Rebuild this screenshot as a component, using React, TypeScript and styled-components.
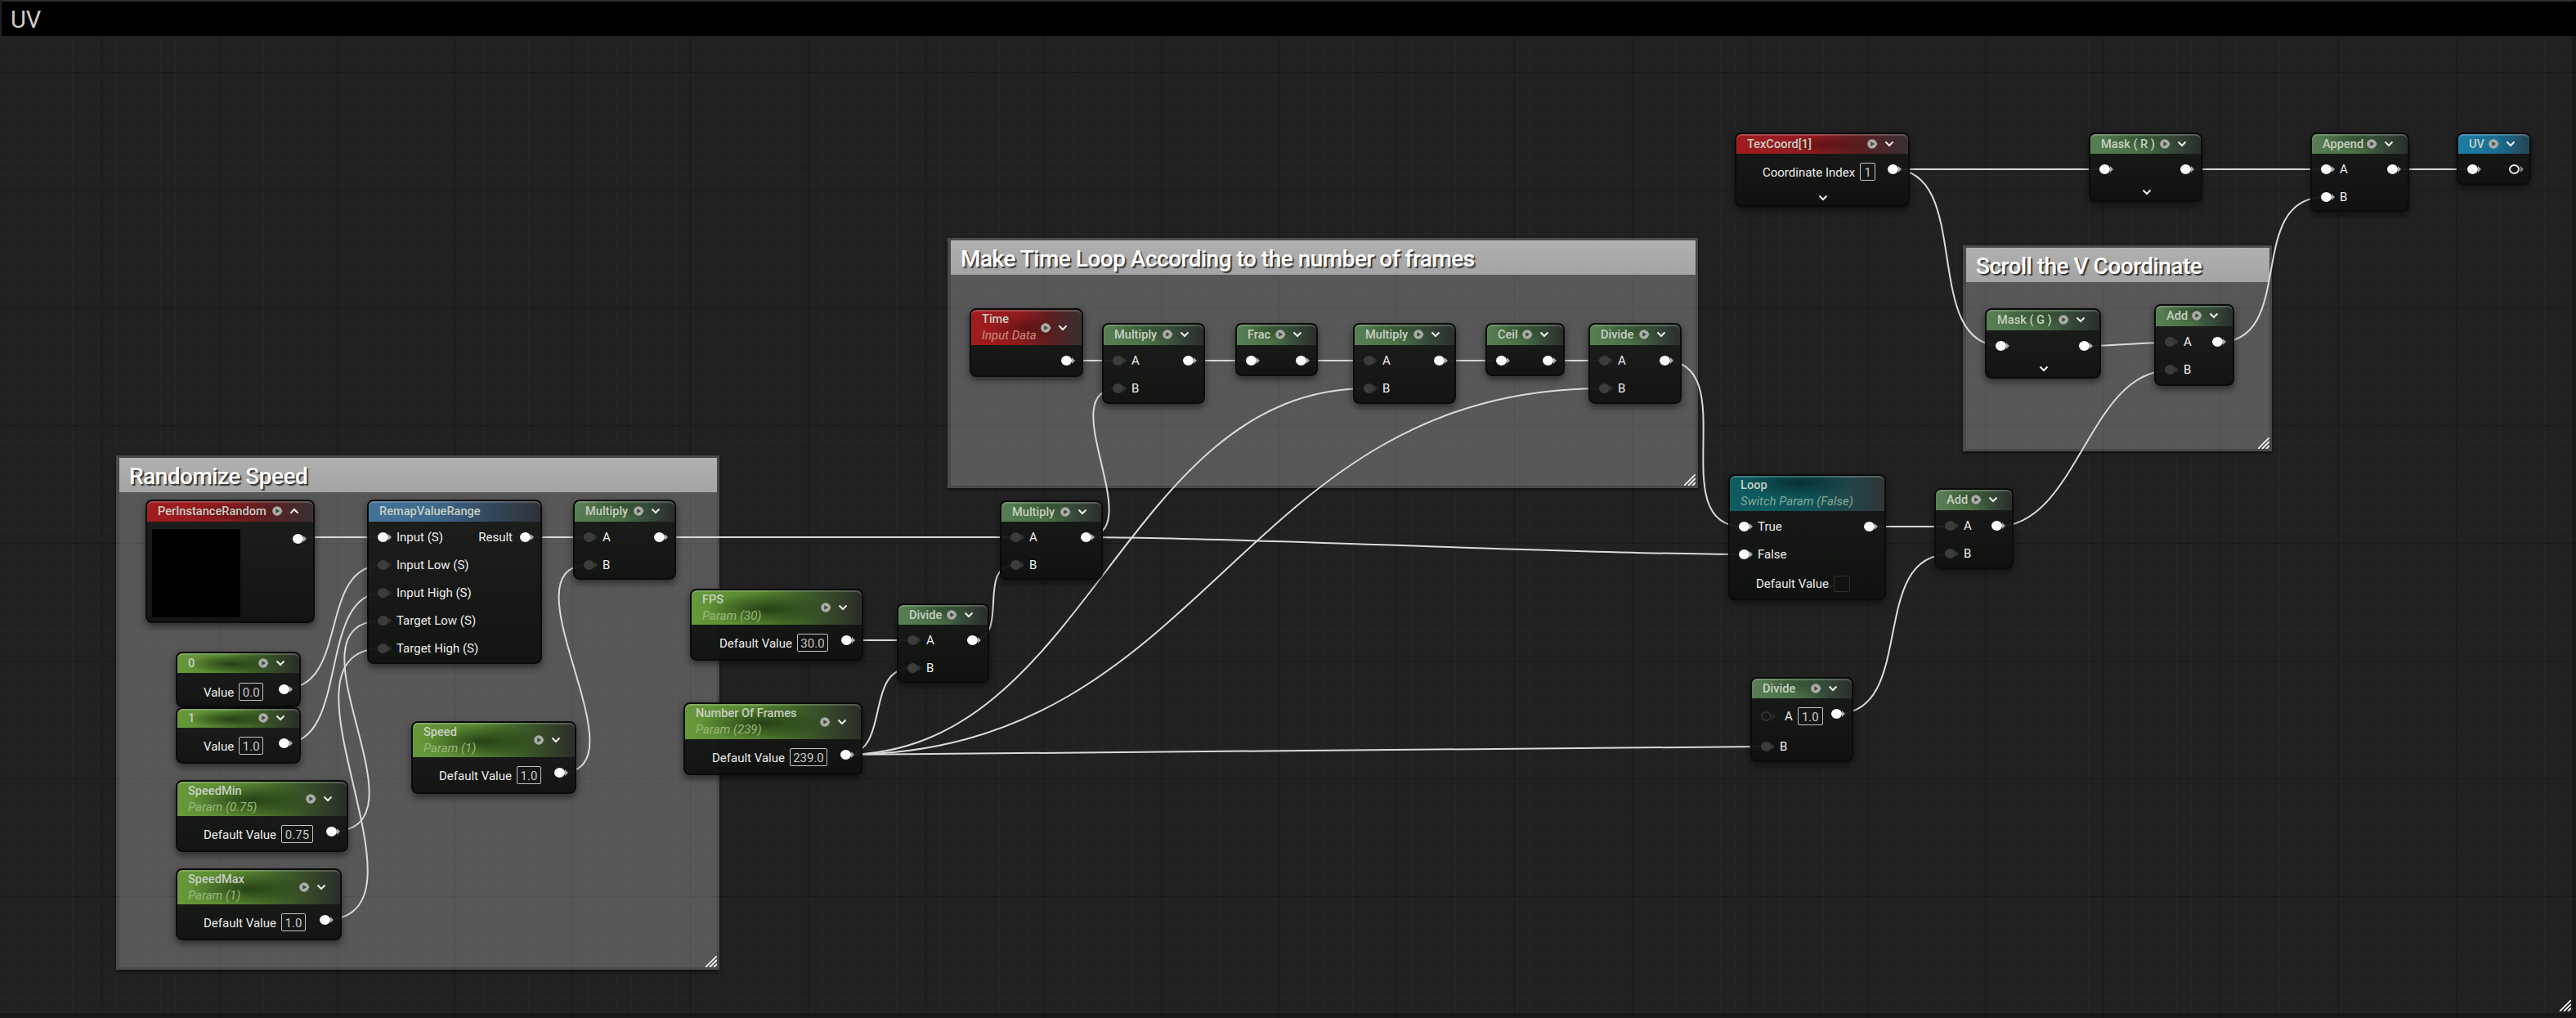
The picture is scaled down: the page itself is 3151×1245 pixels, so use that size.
import React from "react";
import styled, { createGlobalStyle, css } from "styled-components";

const Global = createGlobalStyle`
  html, body { margin: 0; padding: 0; background: #1c1c1c; }
  #root { width: 3151px; height: 1245px; overflow: hidden; }
`;

const Page = styled.div`
  position: relative;
  width: 3151px;
  height: 1245px;
  overflow: hidden;
  font-family: Roboto, "Liberation Sans", sans-serif;
  background-color: #212121;
  background-image:
    linear-gradient(to right, #1a1a1a 1px, transparent 1px),
    linear-gradient(to bottom, #1a1a1a 1px, transparent 1px),
    linear-gradient(to right, #252525 1px, transparent 1px),
    linear-gradient(to bottom, #252525 1px, transparent 1px);
  background-size: 144px 144px, 144px 144px, 18px 18px, 18px 18px;
  background-position: 124px 0, 0 88px, 16px 0, 0 16px;
  &::after {
    content: "";
    position: absolute;
    inset: 0;
    border-right: 5px solid rgba(0, 0, 0, 0.22);
    border-bottom: 6px solid rgba(0, 0, 0, 0.22);
    box-sizing: border-box;
    pointer-events: none;
  }
`;

const TitleBar = styled.header`
  height: 42px;
  box-sizing: border-box;
  margin: 2px 0 0 2px;
  padding: 1px 0 0 11px;
  display: flex;
  align-items: center;
  background: #000;
  color: #cdcdcd;
  font-size: 29px;
  box-shadow: 0 -2px 0 #2b2b2b;
`;

const CommentBox = styled.section<{ $x: number; $y: number; $r: number; $b: number }>`
  position: absolute;
  left: ${(p) => p.$x}px;
  top: ${(p) => p.$y}px;
  width: ${(p) => p.$r - p.$x}px;
  height: ${(p) => p.$b - p.$y}px;
  box-sizing: border-box;
  border: solid rgba(255, 255, 255, 0.18);
  border-width: 3px 3px 3px 4px;
  background: rgba(255, 255, 255, 0.245);
  background-clip: padding-box;
  box-shadow: 0 2px 4px rgba(0, 0, 0, 0.6);
`;

const CommentHeader = styled.h2`
  margin: 0;
  height: 42px;
  box-sizing: border-box;
  padding: 2px 0 0 12px;
  display: flex;
  align-items: center;
  background: linear-gradient(to bottom, #b0b0b0, #a4a4a4);
  color: #fff;
  font-size: 28px;
  font-weight: 500;
  letter-spacing: -0.5px;
  text-shadow: 2px 2px 1px #363636;
`;

const Handle = styled.svg`
  position: absolute;
  right: 0;
  bottom: 0;
  width: 14px;
  height: 14px;
`;

const PageHandle = styled(Handle)`
  right: 6px;
  bottom: 8px;
`;

const WireLayer = styled.svg`
  position: absolute;
  left: 0;
  top: 0;
  width: 3151px;
  height: 1245px;
  pointer-events: none;
`;

const Wire = styled.path`
  fill: none;
  stroke: #dadada;
  stroke-width: 2;
`;

type Hue = "math" | "param" | "red" | "blue" | "sky" | "teal";

const hues: Record<Hue, ReturnType<typeof css>> = {
  math: css`
    background: radial-gradient(ellipse 40% 60% at 48% 25%, rgba(40, 62, 38, 0.6), transparent),
      linear-gradient(to right, #587f53 0%, #4a7046 45%, #36493a 75%, #2a2e2a 100%);
  `,
  param: css`
    background: radial-gradient(ellipse 36% 48% at 44% 55%, rgba(32, 56, 18, 0.88), transparent),
      linear-gradient(to right, #67993a 0%, #56862f 40%, #3d5e28 66%, #2a2d28 100%);
  `,
  red: css`
    background: radial-gradient(ellipse 30% 40% at 50% 55%, rgba(60, 10, 10, 0.5), transparent),
      linear-gradient(to right, #a21c1f 0%, #8e1b1d 45%, #5a2022 72%, #383031 100%);
  `,
  blue: css`
    background: linear-gradient(to right, #447398 0%, #3d668a 40%, #33465a 72%, #2e3236 100%);
  `,
  sky: css`
    background: linear-gradient(to right, #1c7da6 0%, #1a6e92 55%, #274553 100%);
  `,
  teal: css`
    background: radial-gradient(ellipse 35% 45% at 45% 20%, rgba(5, 40, 44, 0.8), transparent),
      linear-gradient(to right, #0f5c60 0%, #0e5458 50%, #21464a 75%, #303636 100%);
  `,
};

const subColors: Record<Hue, string> = {
  math: "#9cb098",
  param: "#98b67c",
  red: "#c98e80",
  blue: "#a0b0c0",
  sky: "#a0c0d0",
  teal: "#83a896",
};

const NodeBox = styled.article<{ $x: number; $y: number; $r: number; $b: number }>`
  position: absolute;
  left: ${(p) => p.$x}px;
  top: ${(p) => p.$y}px;
  width: ${(p) => p.$r - p.$x}px;
  height: ${(p) => p.$b - p.$y}px;
  box-sizing: border-box;
  border: 2px solid #0a0b0a;
  border-radius: 8px;
  background: linear-gradient(to bottom, rgba(25, 27, 25, 0.94), rgba(15, 17, 15, 0.95));
  box-shadow: 0 4px 9px rgba(0, 0, 0, 0.5);
`;

const NodeHeader = styled.header<{ $hue: Hue; $h: number; $two: boolean }>`
  position: relative;
  height: ${(p) => p.$h}px;
  box-sizing: border-box;
  display: flex;
  align-items: center;
  padding: 0 17px ${(p) => (p.$two ? 0 : 1)}px 13px;
  border-radius: 6px 6px 0 0;
  ${(p) => hues[p.$hue]}
  box-shadow: inset 0 2px 1px rgba(255, 255, 255, 0.2);
`;

const Titles = styled.div`
  display: flex;
  flex-direction: column;
  white-space: nowrap;
`;

const NodeTitle = styled.div`
  font-size: 14.6px;
  line-height: 20px;
  font-weight: 500;
  color: #c6cec2;
`;

const NodeSub = styled.div<{ $hue: Hue }>`
  font-size: 15px;
  line-height: 21px;
  font-style: italic;
  color: ${(p) => subColors[p.$hue]};
`;

const Tools = styled.div`
  margin-left: auto;
  display: flex;
  align-items: center;
  gap: 8px;
  flex: none;
`;

const IconSvg = styled.svg`
  display: block;
  flex: none;
`;

const ChevronIcon = ({ up }: { up?: boolean }) => (
  <IconSvg width="12" height="8" viewBox="0 0 12 8">
    <path d={up ? "M1.5 6.5 L6 2 L10.5 6.5" : "M1.5 1.5 L6 6 L10.5 1.5"} fill="none" stroke="#e8e8e8" strokeWidth="2.1" />
  </IconSvg>
);

const PreviewIcon = () => (
  <IconSvg width="13" height="12" viewBox="0 0 13 12">
    <circle cx="6" cy="6" r="5.8" fill="#a9ada5" />
    <path d="M4.4 3.2 L9 6 L4.4 8.8 Z" fill="#3a403a" />
    <path d="M10.6 4.4 L13 6 L10.6 7.6 Z" fill="#a9ada5" />
  </IconSvg>
);

const Body = styled.div<{ $top?: number }>`
  padding-top: ${(p) => p.$top ?? 2}px;
  display: flex;
  flex-direction: column;
`;

const PinRow = styled.div<{ $mt?: number }>`
  height: 34px;
  margin-top: ${(p) => p.$mt ?? 0}px;
  padding: 0 12px 0 11px;
  display: flex;
  align-items: center;
`;

const ValueRow = styled.div<{ $inset: number; $mt?: number }>`
  height: 22px;
  margin-top: ${(p) => p.$mt ?? 0}px;
  padding: 0 12px 0 ${(p) => p.$inset}px;
  display: flex;
  align-items: center;
  gap: 6px;
`;

const ExpandRow = styled.div<{ $mt: number }>`
  margin-top: ${(p) => p.$mt}px;
  display: flex;
  justify-content: center;
  padding-left: 2px;
`;

const Label = styled.span<{ $left?: boolean; $low?: boolean }>`
  font-size: 15px;
  line-height: 20px;
  color: #ececec;
  white-space: nowrap;
  margin-left: ${(p) => (p.$left ? 10 : 0)}px;
  padding-top: ${(p) => (p.$low ? 2 : 0)}px;
`;

const RightLabel = styled(Label)`
  margin-left: auto;
  margin-right: 9px;
`;

const ValueBox = styled.span<{ $w: number; $h?: number; $dim?: boolean }>`
  width: ${(p) => p.$w}px;
  height: ${(p) => p.$h ?? 22}px;
  box-sizing: border-box;
  flex: none;
  border: 1.5px solid ${(p) => (p.$dim ? "#2e302e" : "#c4c4c4")};
  border-radius: 2px;
  display: flex;
  align-items: center;
  justify-content: center;
  padding-top: 1px;
  font-size: 15px;
  color: #c8c8c8;
`;

type PinKind = "on" | "off" | "ring" | "dark";

const pinFill: Record<PinKind, string> = {
  on: "#fbfbfb",
  off: "#3b3d3b",
  ring: "transparent",
  dark: "transparent",
};
const pinEdge: Record<PinKind, string> = {
  on: "#fbfbfb",
  off: "#3b3d3b",
  ring: "#e4e4e4",
  dark: "#333533",
};
const nubColor: Record<PinKind, string> = {
  on: "#a8a8a8",
  off: "#303230",
  ring: "#8a8a8a",
  dark: "#2a2c2a",
};

const Pin = styled.span<{ $k: PinKind; $out?: boolean; $lift?: boolean }>`
  position: relative;
  display: block;
  flex: none;
  width: 13px;
  height: 12px;
  box-sizing: border-box;
  border-radius: 50%;
  background: ${(p) => pinFill[p.$k]};
  border: ${(p) => (p.$k === "ring" || p.$k === "dark" ? 2.5 : 0)}px solid ${(p) => pinEdge[p.$k]};
  margin-left: ${(p) => (p.$out ? "auto" : 0)};
  ${(p) => p.$lift && "align-self: flex-start; margin-top: 2px;"}
  &::after {
    content: "";
    position: absolute;
    top: 50%;
    left: 100%;
    margin-top: -4px;
    margin-left: ${(p) => (p.$k === "ring" || p.$k === "dark" ? 2.5 : 0)}px;
    border-left: 4px solid ${(p) => nubColor[p.$k]};
    border-top: 4px solid transparent;
    border-bottom: 4px solid transparent;
  }
`;

const Preview = styled.div`
  width: 108px;
  height: 108px;
  background: #000;
  flex: none;
`;

const PreviewBody = styled.div`
  padding: 7px 12px 0 6px;
  display: flex;
  align-items: flex-start;
`;

const PreviewPin = styled(Pin)`
  margin-top: 6px;
  align-self: flex-start;
`;

type NodeProps = {
  x: number;
  y: number;
  r: number;
  b: number;
  hb: number;
  hue: Hue;
  title: string;
  sub?: string;
  up?: boolean;
  plain?: boolean;
  top?: number;
  children?: React.ReactNode;
};

const GraphNode = ({ x, y, r, b, hb, hue, title, sub, up, plain, top, children }: NodeProps) => (
  <NodeBox $x={x} $y={y} $r={r} $b={b}>
    <NodeHeader $hue={hue} $h={hb - y - 2} $two={!!sub}>
      <Titles>
        <NodeTitle>{title}</NodeTitle>
        {sub && <NodeSub $hue={hue}>{sub}</NodeSub>}
      </Titles>
      {!plain && (
        <Tools>
          <PreviewIcon />
          <ChevronIcon up={up} />
        </Tools>
      )}
    </NodeHeader>
    <Body $top={top}>{children}</Body>
  </NodeBox>
);

const Comment = ({ x, y, r, b, title }: { x: number; y: number; r: number; b: number; title: string }) => (
  <CommentBox $x={x} $y={y} $r={r} $b={b}>
    <CommentHeader>{title}</CommentHeader>
    <Handle viewBox="0 0 14 14">
      <path d="M0 14 L14 0 M5 14 L14 5 M10 14 L14 10" stroke="#f0f0f0" strokeWidth="1.8" fill="none" />
    </Handle>
  </CommentBox>
);

const ABRows = () => (
  <>
    <PinRow>
      <Pin $k="off" />
      <Label $left>A</Label>
      <Pin $k="on" $out />
    </PinRow>
    <PinRow>
      <Pin $k="off" />
      <Label $left>B</Label>
    </PinRow>
  </>
);

const Through = () => (
  <PinRow>
    <Pin $k="on" />
    <Pin $k="on" $out />
  </PinRow>
);

const DefaultValue = ({ inset, label, value, w }: { inset: number; label: string; value: string; w: number }) => (
  <ValueRow $inset={inset}>
    <Label $low>{label}</Label>
    <ValueBox $w={w}>{value}</ValueBox>
    <Pin $k="on" $out $lift />
  </ValueRow>
);

const w = (x0: number, y0: number, x1: number, y1: number, t: number) =>
  `M${x0} ${y0} C${x0 + t} ${y0} ${x1 - t} ${y1} ${x1} ${y1}`;

const wires: string[] = [
  w(365, 657, 468, 657, 30),
  w(642, 657, 720, 657, 30),
  w(806, 657, 1242, 657, 30),
  w(1326, 657, 2132, 678, 200),
  w(1326, 657, 1368, 475, 85),
  w(1033, 783, 1115, 783, 30),
  w(1188, 783, 1242, 691, 50),
  w(1032, 923, 1115, 817, 60),
  w(1032, 923, 1673, 475, 300),
  w(1032, 923, 1962, 475, 450),
  w(1032, 923, 2160, 913, 200),
  w(1303, 441, 1368, 441, 20),
  w(1453, 441, 1530, 441, 20),
  w(1591, 441, 1673, 441, 20),
  w(1760, 441, 1836, 441, 20),
  w(1893, 441, 1962, 441, 20),
  w(2035, 441, 2132, 644, 100),
  w(2286, 644, 2384, 644, 30),
  w(2246, 873, 2384, 678, 100),
  w(2442, 644, 2654, 453, 100),
  w(2712, 419, 2844, 241, 100),
  w(2315, 207, 2574, 207, 50),
  w(2674, 207, 2844, 207, 50),
  w(2925, 207, 3024, 207, 30),
  w(2315, 207, 2448, 423, 100),
  w(2549, 423, 2654, 419, 50),
  w(348, 842, 468, 691, 80),
  w(348, 909, 468, 725, 80),
  w(405, 1017, 468, 759, 130),
  w(396, 1125, 468, 793, 150),
  w(685, 945, 720, 691, 110),
];

export default function App() {
  return (
    <Page>
      <Global />
      <TitleBar>UV</TitleBar>

      <Comment x={142} y={557} r={880} b={1186} title="Randomize Speed" />
      <Comment x={1159} y={291} r={2077} b={597} title="Make Time Loop According to the number of frames" />
      <Comment x={2401} y={300} r={2779} b={552} title="Scroll the V Coordinate" />

      <WireLayer viewBox="0 0 3151 1245">
        {wires.map((d) => (
          <Wire key={d} d={d} />
        ))}
      </WireLayer>

      <GraphNode x={178} y={611} r={385} b={762} hb={638} hue="red" title="PerInstanceRandom" up>
        <PreviewBody>
          <Preview />
          <PreviewPin $k="on" $out />
        </PreviewBody>
      </GraphNode>

      <GraphNode x={449} y={611} r={663} b={812} hb={638} hue="blue" title="RemapValueRange" plain>
        <PinRow>
          <Pin $k="on" />
          <Label $left>Input (S)</Label>
          <RightLabel>Result</RightLabel>
          <Pin $k="on" />
        </PinRow>
        {["Input Low (S)", "Input High (S)", "Target Low (S)", "Target High (S)"].map((t) => (
          <PinRow key={t}>
            <Pin $k="off" />
            <Label $left>{t}</Label>
          </PinRow>
        ))}
      </GraphNode>

      <GraphNode x={701} y={611} r={827} b={709} hb={638} hue="math" title="Multiply">
        <ABRows />
      </GraphNode>

      <GraphNode x={215} y={797} r={368} b={865} hb={823} hue="param" title="0" top={12}>
        <DefaultValue inset={32} label="Value" value="0.0" w={30} />
      </GraphNode>
      <GraphNode x={215} y={865} r={368} b={934} hb={890} hue="param" title="1" top={11}>
        <DefaultValue inset={32} label="Value" value="1.0" w={30} />
      </GraphNode>
      <GraphNode x={215} y={954} r={426} b={1042} hb={998} hue="param" title="SpeedMin" sub="Param (0.75)" top={11}>
        <DefaultValue inset={32} label="Default Value" value="0.75" w={39} />
      </GraphNode>
      <GraphNode x={215} y={1062} r={418} b={1150} hb={1106} hue="param" title="SpeedMax" sub="Param (1)" top={11}>
        <DefaultValue inset={32} label="Default Value" value="1.0" w={30} />
      </GraphNode>
      <GraphNode x={503} y={882} r={705} b={971} hb={926} hue="param" title="Speed" sub="Param (1)" top={11}>
        <DefaultValue inset={32} label="Default Value" value="1.0" w={30} />
      </GraphNode>

      <GraphNode x={844} y={720} r={1056} b={808} hb={764} hue="param" title="FPS" sub="Param (30)" top={11}>
        <DefaultValue inset={34} label="Default Value" value="30.0" w={38} />
      </GraphNode>
      <GraphNode x={836} y={859} r={1055} b={948} hb={904} hue="param" title="Number Of Frames" sub="Param (239)" top={11}>
        <DefaultValue inset={33} label="Default Value" value="239.0" w={46} />
      </GraphNode>
      <GraphNode x={1097} y={738} r={1210} b={835} hb={764} hue="math" title="Divide">
        <ABRows />
      </GraphNode>
      <GraphNode x={1223} y={612} r={1349} b={709} hb={638} hue="math" title="Multiply">
        <ABRows />
      </GraphNode>

      <GraphNode x={1186} y={377} r={1325} b={461} hb={422} hue="red" title="Time" sub="Input Data">
        <PinRow>
          <Pin $k="on" $out />
        </PinRow>
      </GraphNode>
      <GraphNode x={1348} y={395} r={1474} b={494} hb={422} hue="math" title="Multiply">
        <ABRows />
      </GraphNode>
      <GraphNode x={1511} y={395} r={1612} b={460} hb={422} hue="math" title="Frac">
        <Through />
      </GraphNode>
      <GraphNode x={1655} y={395} r={1781} b={494} hb={422} hue="math" title="Multiply">
        <ABRows />
      </GraphNode>
      <GraphNode x={1817} y={395} r={1914} b={460} hb={422} hue="math" title="Ceil">
        <Through />
      </GraphNode>
      <GraphNode x={1943} y={395} r={2057} b={494} hb={422} hue="math" title="Divide">
        <ABRows />
      </GraphNode>

      <GraphNode x={2114} y={580} r={2307} b={734} hb={625} hue="teal" title="Loop" sub="Switch Param (False)" plain>
        <PinRow>
          <Pin $k="on" />
          <Label $left>True</Label>
          <Pin $k="on" $out />
        </PinRow>
        <PinRow>
          <Pin $k="on" />
          <Label $left>False</Label>
        </PinRow>
        <ValueRow $inset={32} $mt={8}>
          <Label>Default Value</Label>
          <ValueBox $w={20} $h={20} $dim />
        </ValueRow>
      </GraphNode>
      <GraphNode x={2366} y={597} r={2463} b={696} hb={624} hue="math" title="Add">
        <ABRows />
      </GraphNode>
      <GraphNode x={2141} y={828} r={2267} b={932} hb={854} hue="math" title="Divide" top={11}>
        <ValueRow $inset={11}>
          <Pin $k="dark" />
          <Label $left>A</Label>
          <ValueBox $w={31}>1.0</ValueBox>
          <Pin $k="on" $out $lift />
        </ValueRow>
        <PinRow $mt={9}>
          <Pin $k="off" />
          <Label $left>B</Label>
        </PinRow>
      </GraphNode>

      <GraphNode x={2122} y={162} r={2336} b={253} hb={188} hue="red" title="TexCoord[1]" top={11}>
        <DefaultValue inset={32} label="Coordinate Index" value="1" w={19} />
        <ExpandRow $mt={17}>
          <ChevronIcon />
        </ExpandRow>
      </GraphNode>
      <GraphNode x={2555} y={162} r={2694} b={247} hb={188} hue="math" title="Mask ( R )">
        <Through />
        <ExpandRow $mt={7}>
          <ChevronIcon />
        </ExpandRow>
      </GraphNode>
      <GraphNode x={2826} y={162} r={2947} b={259} hb={188} hue="math" title="Append">
        <PinRow>
          <Pin $k="on" />
          <Label $left>A</Label>
          <Pin $k="on" $out />
        </PinRow>
        <PinRow>
          <Pin $k="on" />
          <Label $left>B</Label>
        </PinRow>
      </GraphNode>
      <GraphNode x={3005} y={162} r={3096} b={226} hb={188} hue="sky" title="UV">
        <PinRow>
          <Pin $k="on" />
          <Pin $k="ring" $out />
        </PinRow>
      </GraphNode>
      <GraphNode x={2428} y={377} r={2570} b={463} hb={404} hue="math" title="Mask ( G )">
        <Through />
        <ExpandRow $mt={7}>
          <ChevronIcon />
        </ExpandRow>
      </GraphNode>
      <GraphNode x={2635} y={372} r={2733} b={472} hb={399} hue="math" title="Add">
        <ABRows />
      </GraphNode>

      <PageHandle viewBox="0 0 14 14">
        <path d="M0 14 L14 0 M5 14 L14 5 M10 14 L14 10" stroke="#f0f0f0" strokeWidth="1.8" fill="none" />
      </PageHandle>
    </Page>
  );
}
